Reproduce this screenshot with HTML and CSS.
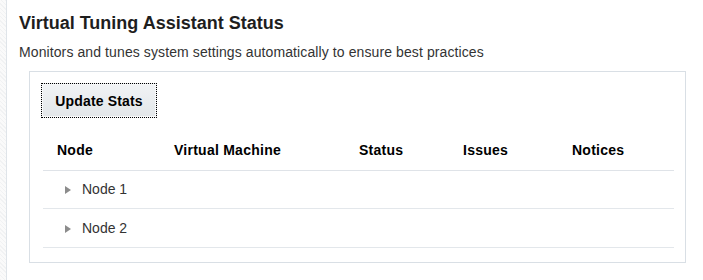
FILE: index.html
```html
<!DOCTYPE html>
<html lang="en">
<head>
    <meta charset="UTF-8">
    <meta name="viewport" content="width=device-width, initial-scale=1.0">
    <title>Virtual Tuning Assistant Status</title>
    <link rel="stylesheet" href="styles.css">
</head>
<body>
    <div class="rail"></div>
    <div class="main">
        <h1>Virtual Tuning Assistant Status</h1>
        <p class="subtitle">Monitors and tunes system settings automatically to ensure best practices</p>

        <div class="panel">
            <button type="button" class="update-btn">Update Stats</button>

            <table class="vta-table">
                <thead>
                    <tr>
                        <th class="col-node">Node</th>
                        <th class="col-vm">Virtual Machine</th>
                        <th class="col-status">Status</th>
                        <th class="col-issues">Issues</th>
                        <th>Notices</th>
                    </tr>
                </thead>
                <tbody>
                    <tr>
                        <td class="node-cell"><span class="caret"></span>Node 1</td>
                        <td></td><td></td><td></td><td></td>
                    </tr>
                    <tr>
                        <td class="node-cell"><span class="caret"></span>Node 2</td>
                        <td></td><td></td><td></td><td></td>
                    </tr>
                </tbody>
            </table>
        </div>
    </div>
</body>
</html>
```

FILE: styles.css
```css
* { margin: 0; padding: 0; box-sizing: border-box; }
body {
    font-family: "Liberation Sans", Arial, sans-serif;
    background: #fff;
    color: #333;
    min-height: 100vh;
    display: flex;
}
.rail {
    width: 7px;
    flex-shrink: 0;
    border-right: 1px solid #dfe4e9;
    background: repeating-linear-gradient(45deg, #f1f2f3 0 1px, #fafafa 1px 3px);
}
.main {
    flex: 1;
    padding: 12px 17px 0 12px;
}
h1 {
    font-size: 18px;
    line-height: 22px;
    font-weight: bold;
    color: #1e1e1e;
}
.subtitle {
    font-size: 14px;
    line-height: 18px;
    margin-top: 9px;
    letter-spacing: 0.1px;
    color: #333;
}
.panel {
    margin: 10px 0 0 10px;
    border: 1px solid #d9dfe5;
    padding: 11px 11px 14px 11px;
}
.update-btn {
    display: block;
    width: 116px;
    height: 35px;
    font-family: inherit;
    font-size: 14px;
    font-weight: bold;
    letter-spacing: 0.15px;
    color: #000;
    border: 1px dotted #000;
    background: linear-gradient(#f1f3f5, #e2e6e9);
    box-shadow: inset 0 0 0 1px #f7f8f9;
    cursor: pointer;
}
.vta-table {
    margin: 12px 0 0 2px;
    width: calc(100% - 2px);
    border-collapse: collapse;
    font-size: 14px;
}
.vta-table th {
    height: 40px;
    text-align: left;
    font-weight: bold;
    letter-spacing: 0.25px;
    color: #000;
    padding: 0 0 0 14px;
    border-bottom: 1px solid #dfe3e8;
}
.col-node { width: 117px; }
.col-vm { width: 185px; }
.col-status { width: 104px; }
.col-issues { width: 109px; }
.vta-table td {
    height: 38.5px;
    padding: 0;
    border-bottom: 1px solid #e3e7eb;
    color: #333;
}
.vta-table td.node-cell {
    padding-left: 22px;
    white-space: nowrap;
}
.caret {
    display: inline-block;
    width: 0;
    height: 0;
    border-left: 6px solid #8c8c8c;
    border-top: 4px solid transparent;
    border-bottom: 4px solid transparent;
    margin-right: 11px;
    vertical-align: 0;
}
```
